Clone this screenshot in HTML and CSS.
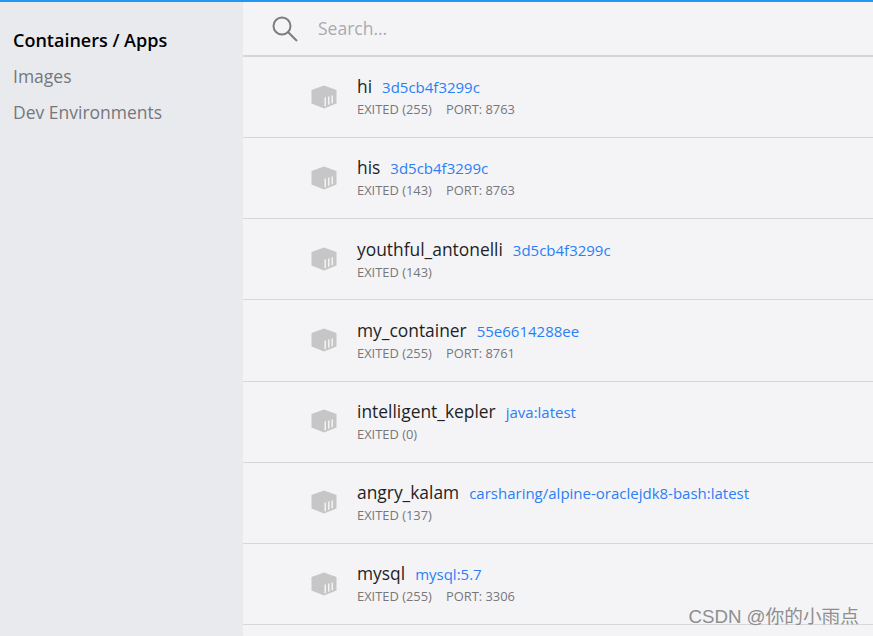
FILE: index.html
```html
<!DOCTYPE html>
<html lang="en">

<head>
    <meta charset="UTF-8">
    <title>Containers / Apps</title>
    <link rel="stylesheet" href="styles.css">
</head>

<body>
    <svg class="defs" width="0" height="0">
        <symbol id="box" viewBox="0 0 26 24">
            <path fill="#c6c6c6" d="M13 .5 25.500 5V18.500L13 23.500 .5 18.500V5Z" />
            <path fill="#f3f3f6" d="M13.500 12.500h1.500v8.500l-1.500.6zM17 11.500h1.500v7.800l-1.500.6zM20.500 10.500H22v7.500l-1.500.6z" />
        </symbol>
    </svg>

    <div class="app">
        <div class="sidebar">
            <a class="navItem active">Containers / Apps</a>
            <a class="navItem">Images</a>
            <a class="navItem">Dev Environments</a>
        </div>

        <div class="main">
            <div class="search">
                <svg class="searchIcon" width="28" height="28" viewBox="0 0 28 28">
                    <circle cx="11" cy="11" r="8.500" />
                    <path d="M17.200 17.200 26 26" />
                </svg>
                <span class="searchText">Search...</span>
            </div>

            <div class="row">
                <svg class="rowIcon"><use href="#box" /></svg>
                <div class="info">
                    <div class="title"><span class="name">hi</span><span class="image">3d5cb4f3299c</span></div>
                    <div class="meta"><span>EXITED (255)</span><span>PORT: 8763</span></div>
                </div>
            </div>
            <div class="row">
                <svg class="rowIcon"><use href="#box" /></svg>
                <div class="info">
                    <div class="title"><span class="name">his</span><span class="image">3d5cb4f3299c</span></div>
                    <div class="meta"><span>EXITED (143)</span><span>PORT: 8763</span></div>
                </div>
            </div>
            <div class="row">
                <svg class="rowIcon"><use href="#box" /></svg>
                <div class="info">
                    <div class="title"><span class="name">youthful_antonelli</span><span class="image">3d5cb4f3299c</span></div>
                    <div class="meta"><span>EXITED (143)</span></div>
                </div>
            </div>
            <div class="row">
                <svg class="rowIcon"><use href="#box" /></svg>
                <div class="info">
                    <div class="title"><span class="name">my_container</span><span class="image">55e6614288ee</span></div>
                    <div class="meta"><span>EXITED (255)</span><span>PORT: 8761</span></div>
                </div>
            </div>
            <div class="row">
                <svg class="rowIcon"><use href="#box" /></svg>
                <div class="info">
                    <div class="title"><span class="name">intelligent_kepler</span><span class="image">java:latest</span></div>
                    <div class="meta"><span>EXITED (0)</span></div>
                </div>
            </div>
            <div class="row">
                <svg class="rowIcon"><use href="#box" /></svg>
                <div class="info">
                    <div class="title"><span class="name">angry_kalam</span><span class="image">carsharing/alpine-oraclejdk8-bash:latest</span></div>
                    <div class="meta"><span>EXITED (137)</span></div>
                </div>
            </div>
            <div class="row">
                <svg class="rowIcon"><use href="#box" /></svg>
                <div class="info">
                    <div class="title"><span class="name">mysql</span><span class="image">mysql:5.7</span></div>
                    <div class="meta"><span>EXITED (255)</span><span>PORT: 3306</span></div>
                </div>
            </div>
        </div>
    </div>

    <div class="watermark">CSDN @你的小雨点</div>
</body>

</html>
```

FILE: styles.css
```css
html,
body {
    height: 100%;
}

body {
    margin: 0;
    overflow: hidden;
    background-color: #f4f4f7;
    font-family: "Open Sans", "Noto Sans CJK SC", sans-serif;
}

.defs {
    position: absolute;
}

.app {
    display: flex;
    height: 634px;
    border-top: 2px solid #2196f3;
}

.sidebar {
    width: 243px;
    flex-shrink: 0;
    padding-top: 20px;
    box-sizing: border-box;
    background-color: #e9eaee;
}

.navItem {
    display: block;
    height: 36px;
    padding-left: 13px;
    font-size: 17.500px;
    line-height: 36px;
    color: #75777c;
}

.navItem.active {
    font-size: 18px;
    font-weight: 600;
    color: #000;
}

.main {
    flex: 1;
    min-width: 0;
}

.search {
    display: flex;
    align-items: center;
    height: 53px;
    padding-left: 28px;
    border-bottom: 2px solid #d5d5d8;
}

.searchIcon {
    margin-right: 19px;
}

.searchIcon circle,
.searchIcon path {
    fill: none;
    stroke: #7b7d80;
    stroke-width: 2;
}

.searchText {
    margin-bottom: 2px;
    font-size: 17.500px;
    color: #a9abae;
}

.row {
    display: flex;
    align-items: center;
    height: 80.170px;
    padding-left: 68px;
    border-bottom: 1px solid #d7d7da;
}

.rowIcon {
    width: 26px;
    height: 24px;
    margin-right: 20px;
    margin-bottom: 1px;
}

.info {
    margin-bottom: 1.500px;
}

.title {
    display: flex;
    align-items: baseline;
    line-height: 24px;
}

.name {
    font-size: 17.400px;
    color: #1f1f1f;
}

.image {
    margin-left: 10px;
    font-size: 15px;
    color: #2a7ff5;
}

.meta {
    display: flex;
    gap: 14px;
    margin-top: 1px;
    font-size: 12.900px;
    line-height: 18px;
    color: #75777c;
}

.watermark {
    position: absolute;
    right: 14px;
    bottom: 8px;
    font-family: "Liberation Sans", "Noto Sans CJK SC", sans-serif;
    font-size: 18.700px;
    color: #8e8e8e;
}
```
